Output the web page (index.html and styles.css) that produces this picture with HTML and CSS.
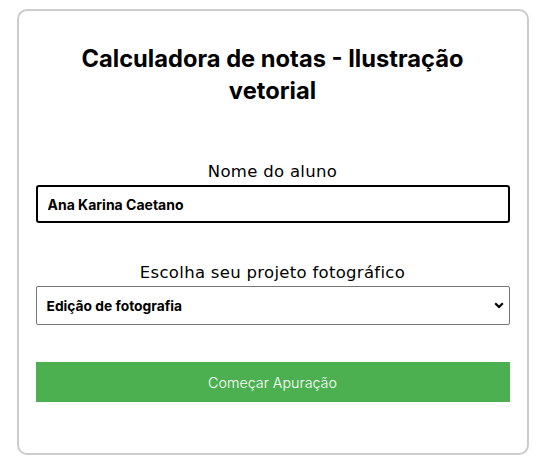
FILE: index.html
```html
<!DOCTYPE html>
<html lang="pt">
<head>
<meta charset="utf-8">
<link rel="stylesheet" href="styles.css">
</head>
<body>
<div class="card">
  <h1 class="title">Calculadora de notas - Ilustração vetorial</h1>
  <div class="field">
    <label class="label" for="nome">Nome do aluno</label>
    <input class="text-input" id="nome" type="text" value="Ana Karina Caetano">
  </div>
  <div class="field">
    <label class="label" for="proj">Escolha seu projeto fotográfico</label>
    <div class="select-wrap">
      <select class="select" id="proj">
        <option>Edição de fotografia</option>
      </select>
      <svg class="chev" width="10" height="7" viewBox="0 0 10 7"><path d="M1.2 1.2 L5 5 L8.8 1.2" fill="none" stroke="#000" stroke-width="2.2"/></svg>
    </div>
  </div>
  <button class="btn">Começar Apuração</button>
</div>
</body>
</html>
```

FILE: styles.css
```css
* { box-sizing: border-box; }
html, body { margin: 0; padding: 0; background: #fff; }
body { padding-top: 9px; }
.card {
  width: 512px;
  height: 446px;
  margin: 0 auto;
  border: 2px solid #cccccc;
  border-radius: 10px;
  padding: 32px 17px 0 17px;
  display: flex;
  flex-direction: column;
  align-items: stretch;
}
.title {
  margin: 0 0 55px 0;
  font-family: Inter, sans-serif;
  font-weight: 700;
  font-size: 23.7px;
  line-height: 32px;
  text-align: center;
  color: #000;
  padding: 0 20px;
}
.field {
  display: flex;
  flex-direction: column;
  margin-bottom: 40px;
}
.field + .field { margin-bottom: 37px; }
.label {
  font-family: "DejaVu Sans", sans-serif;
  font-size: 16.5px;
  letter-spacing: 0.3px;
  text-align: center;
  color: #000;
  line-height: 19px;
  margin-bottom: 4px;
}
.text-input {
  height: 38px;
  border: 2px solid #000;
  border-radius: 3px;
  padding: 0 10px;
  font-family: Inter, sans-serif;
  font-weight: 700;
  font-size: 14px;
  color: #000;
  outline: none;
}
.select-wrap { position: relative; }
.select {
  width: 100%;
  height: 39px;
  border: 1px solid #767676;
  border-radius: 2px;
  padding: 0 10px;
  font-family: Inter, sans-serif;
  font-weight: 700;
  font-size: 13.8px;
  color: #000;
  background: #fff;
  appearance: none;
  -webkit-appearance: none;
}
.chev { position: absolute; right: 6px; top: 16px; pointer-events: none; }
.btn {
  height: 40px;
  border: none;
  background: #4caf50;
  color: #fff;
  font-family: Inter, sans-serif;
  font-weight: 300;
  font-size: 14.3px;
}
```
